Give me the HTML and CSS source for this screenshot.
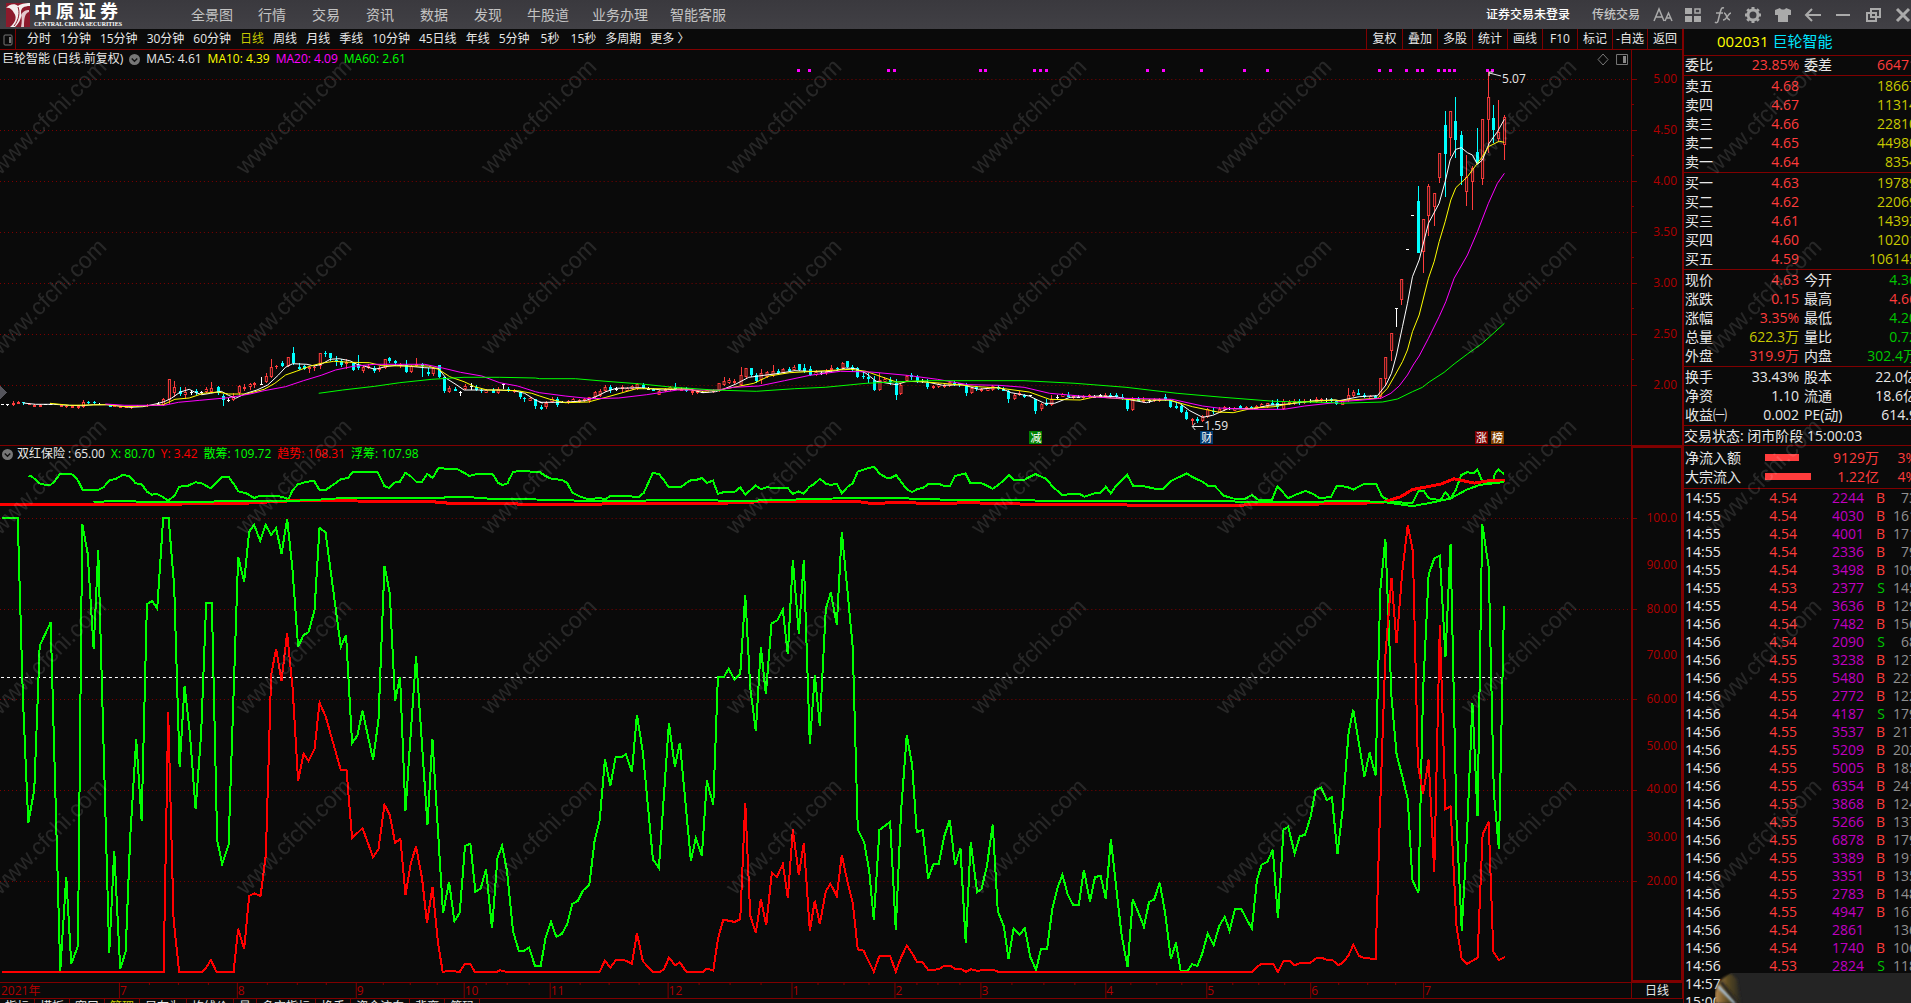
FILE: index.html
```html
<!DOCTYPE html>
<html lang="zh-CN">
<head>
<meta charset="utf-8">
<title>巨轮智能 002031</title>
<link rel="stylesheet" href="styles.css">
</head>
<body>
<div class="app">
  <header class="top">
    <div class="brand">
      <svg class="brand-mark" viewBox="0 0 24 24" aria-hidden="true">
        <rect width="24" height="24" fill="#8c1a2c"/>
        <path d="M0 5C3 1 9 0 12 3C14 1 19 0 24 0V3C18 3 15 5 15 9C16 14 14 19 9 24H4C10 19 11 14 8 10C6 6 3 4 0 5Z" fill="#f4eeee"/>
        <path d="M12 4C14 9 13 17 8 23" stroke="#8c1a2c" fill="none"/>
        <path d="M15 12C17 8 20 7 23 7V9C19 10 18 15 18 24H15C16 19 16 15 15 12Z" fill="#e4c8cc"/>
      </svg>
      <div class="brand-text">
        <div class="brand-cn"><span>中</span><span>原</span><span>证</span><span>券</span></div>
        <div class="brand-en">CENTRAL CHINA SECURITIES</div>
      </div>
    </div>
    <nav class="menu">
      <button class="w3">全景图</button><button>行情</button><button>交易</button><button>资讯</button><button>数据</button><button>发现</button><button class="w3">牛股道</button><button class="w4">业务办理</button><button class="w4">智能客服</button>
    </nav>
    <div class="account">
      <button class="login">证券交易未登录</button>
      <button class="classic">传统交易</button>
    </div>
    <div class="tools">
      <button aria-label="字体"><svg viewBox="0 0 20 20"><path d="M1 16L6 4L11 16M3 12H9M12 16L15.500 8L19 16M13 13H18" fill="none" stroke="#aaa" stroke-width="1.500"/></svg></button>
      <button aria-label="布局"><svg viewBox="0 0 20 20"><path d="M2 3H9V9H2ZM2 11H9V17H2ZM11 11H18V17H11Z" fill="#aaa"/><path d="M12 4H17V8H12Z" fill="none" stroke="#aaa" stroke-width="1.500"/></svg></button>
      <button aria-label="公式"><svg viewBox="0 0 20 20"><path d="M11 3C8 2 8 5 7 8L5 16C4.500 18 3 18 2 17M3 8H10M11 8C14 8 13 15 17 15M18 8C15 8 14 15 10 15" fill="none" stroke="#aaa" stroke-width="1.500"/></svg></button>
      <button aria-label="设置"><svg viewBox="0 0 20 20"><circle cx="10" cy="10" r="5" fill="none" stroke="#aaa" stroke-width="3"/><path d="M10 2V5M10 15V18M2 10H5M15 10H18M4.300 4.300L6.500 6.500M13.500 13.500L15.700 15.700M15.700 4.300L13.500 6.500M6.500 13.500L4.300 15.700" stroke="#aaa" stroke-width="3"/></svg></button>
      <button aria-label="皮肤"><svg viewBox="0 0 20 20"><path d="M7 3C8 5 12 5 13 3L18 5V10H15V17H5V10H2V5Z" fill="#aaa"/></svg></button>
      <button aria-label="后退"><svg viewBox="0 0 20 20"><path d="M9 4L3 10L9 16M3 10H18" fill="none" stroke="#aaa" stroke-width="2"/></svg></button>
      <button aria-label="最小化"><svg viewBox="0 0 20 20"><path d="M3 10H17" stroke="#aaa" stroke-width="2"/></svg></button>
      <button aria-label="还原"><svg viewBox="0 0 20 20"><path d="M8 4H17V12H8ZM4 8H13V16H4Z" fill="none" stroke="#aaa" stroke-width="2"/></svg></button>
      <button aria-label="关闭"><svg viewBox="0 0 20 20"><path d="M4 4L16 16M16 4L4 16" stroke="#aaa" stroke-width="3"/></svg></button>
    </div>
  </header>

  <main class="charts">
    <div class="toolbar">
      <button class="side" aria-label="侧栏"><svg viewBox="0 0 10 12"><rect x="1" y="1" width="8" height="10" rx="1" fill="none" stroke="#777"/><rect x="6" y="3" width="2" height="6" fill="#777"/></svg></button>
      <div class="periods">
        <button>分时</button><button>1分钟</button><button>15分钟</button><button>30分钟</button><button>60分钟</button><button class="on">日线</button><button>周线</button><button>月线</button><button>季线</button><button>10分钟</button><button>45日线</button><button>年线</button><button>5分钟</button><button class="sec">5秒</button><button class="sec">15秒</button><button>多周期</button><button>更多 〉</button>
      </div>
      <div class="actions">
        <button>复权</button><button>叠加</button><button>多股</button><button>统计</button><button>画线</button><button>F10</button><button>标记</button><button>-自选</button><button>返回</button>
      </div>
    </div>

    <section class="price">
      <svg id="price" class="plot" viewBox="0 50 1684 396" preserveAspectRatio="none"></svg>
      <div class="legend">
        <span>巨轮智能 (日线.前复权)</span>
        <svg class="drop" viewBox="0 0 12 12"><circle cx="6" cy="6" r="6" fill="#777"/><path d="M3 5L6 8L9 5" fill="none" stroke="#111" stroke-width="1.500"/></svg>
        <span>MA5: 4.61</span><span class="yellow">MA10: 4.39</span><span class="magenta">MA20: 4.09</span><span class="lime">MA60: 2.61</span>
      </div>
    </section>

    <section class="indicator">
      <svg id="indicator" class="plot" viewBox="0 446 1684 536" preserveAspectRatio="none"></svg>
      <div class="legend">
        <svg class="drop" viewBox="0 0 12 12"><circle cx="6" cy="6" r="6" fill="#777"/><path d="M3 5L6 8L9 5" fill="none" stroke="#111" stroke-width="1.500"/></svg>
        <span class="name">双红保险 : 65.00</span><span class="lime">X: 80.70</span><span class="red">Y: 3.42</span><span class="lime">散筹: 109.72</span><span class="red">趋势: 108.31</span><span class="lime">浮筹: 107.98</span>
      </div>
    </section>

    <svg id="dates" class="dates" viewBox="0 982 1684 17" preserveAspectRatio="none"></svg>
    <div class="tabs">
      <button>指标</button><button>模板</button><button>窗口</button><button class="on">管理</button><button>另存为</button><button>均线价</button><button>量</button><button>多空指标</button><button>换手</button><button>资金流向</button><button>背离</button><button>筹码</button>
    </div>
  </main>

  <aside class="quote">
    <div class="quote-inner">
      <h1><span class="yellow">002031</span> <span class="cyan">巨轮智能</span></h1>
      <table class="grid"><tbody id="ratio"></tbody></table>
      <table class="grid"><tbody id="asks"></tbody></table>
      <table class="grid"><tbody id="bids"></tbody></table>
      <table class="grid"><tbody id="stats"></tbody></table>
      <table class="grid"><tbody id="basics"></tbody></table>
      <p class="state">交易状态: 闭市阶段 15:00:03</p>
      <table class="flow">
        <tbody>
          <tr><th>净流入额</th><td><i class="bar" style="width:34px"></i></td><td class="num">9129万</td><td class="num">3%</td></tr>
          <tr><th>大宗流入</th><td><i class="bar" style="width:46px"></i></td><td class="num">1.22亿</td><td class="num">4%</td></tr>
        </tbody>
      </table>
      <table class="ticks"><tbody id="ticks"></tbody></table>
    </div>
  </aside>
</div>

<svg class="marks" aria-hidden="true">
  <defs>
    <pattern id="mark" x="-74" y="27" width="245" height="180" patternUnits="userSpaceOnUse">
      <text x="123" y="97" text-anchor="middle" transform="rotate(-45 123 90)">www.cfchi.com</text>
    </pattern>
  </defs>
  <rect y="50" width="100%" height="876" fill="url(#mark)"/>
</svg>

<svg class="popup" viewBox="0 0 195 30" preserveAspectRatio="xMinYMin slice" aria-hidden="true">
  <defs>
    <linearGradient id="glow" x1="0" x2="1"><stop offset="0" stop-color="#b88a52"/><stop offset="0.500" stop-color="#5a4a22"/><stop offset="1" stop-color="#242424"/></linearGradient>
    <filter id="soft"><feGaussianBlur stdDeviation="1"/></filter>
  </defs>
  <path d="M4 30C4 14 8 4 16 0H195V30Z" fill="#242424"/>
  <path d="M0 20C2 10 8 3 16 1L22 6L26 30H0Z" fill="url(#glow)" filter="url(#soft)"/>
  <path d="M3 13L20 30" stroke="#a9bccb" stroke-width="3" filter="url(#soft)"/>
  <path d="M6 9L22 29" stroke="#2a2620" stroke-width="3" filter="url(#soft)"/>
</svg>
<script src="chart.js"></script>
</body>
</html>
```
FILE: styles.css
```css
* { box-sizing: border-box; margin: 0; padding: 0; }
body {
  height: 100vh;
  overflow: hidden;
  background: #0a0a0a;
  color: #e8e8e8;
  font: 12px/16px "Open Sans", "Noto Sans CJK SC", sans-serif;
}
button { border: 0; background: none; color: inherit; font: inherit; white-space: nowrap; }
.yellow { color: #ff0; }
.magenta { color: #f0f; }
.lime { color: #0f0; }
.red { color: #f00; }
.cyan { color: #00e5ff; }

.app {
  display: grid;
  grid-template-columns: minmax(0, 1fr) 228px;
  grid-template-rows: 29px minmax(0, 1fr);
  height: 100vh;
}

/* title bar */
.top {
  grid-column: 1 / -1;
  display: flex;
  align-items: center;
  min-width: 0;
  background: linear-gradient(#3a393e, #414045);
  color: #c4c4c4;
  overflow: hidden;
}
.brand { display: flex; gap: 4px; width: 179px; padding-left: 6px; align-items: center; }
.brand-mark { width: 24px; height: 24px; }
.brand-cn { display: flex; gap: 4px; font-size: 18px; line-height: 20px; font-weight: 700; color: #fff; }
.brand-en { font: 700 6px/7px "Liberation Serif", serif; color: #fff; white-space: nowrap; }
.menu { display: flex; font-size: 14px; }
.menu button { width: 54px; text-align: center; }
.menu .w3 { width: 66px; }
.menu .w4 { width: 78px; }
.account { display: flex; gap: 22px; margin-left: auto; padding-right: 8px; }
.login { color: #fff; font-weight: 500; }
.classic { font-weight: 500; }
.tools { display: flex; margin-right: -7px; }
.tools button { display: grid; place-items: center; width: 30px; height: 28px; }
.tools svg { width: 20px; height: 20px; }

/* left side */
.charts { display: flex; flex-direction: column; min-width: 0; }
.toolbar { display: flex; flex: 0 0 21px; border-bottom: 1px solid #800000; }
.side { width: 16px; border-right: 1px solid #800000; }
.side svg { width: 10px; height: 12px; vertical-align: middle; }
.periods { display: flex; gap: 9px; padding-left: 11px; }
.periods .on { color: #c8c800; }
.periods .sec { min-width: 23px; }
.actions { display: flex; margin-left: auto; border-left: 1px solid #800000; border-right: 1px solid #800000; }
.actions button { width: 35px; text-align: center; }
.actions button + button { border-left: 1px solid #800000; }

.price, .indicator { position: relative; min-height: 0; }
.price { flex: 396 1 0; }
.indicator { flex: 536 1 0; }
.plot { position: absolute; inset: 0; width: 100%; height: 100%; }
.legend { position: relative; display: flex; align-items: center; gap: 6px; padding: 1px 2px; white-space: nowrap; }
.indicator .legend { padding-top: 0; }
.indicator .name { margin-left: -2px; }
.drop { width: 11px; height: 11px; }
.dates { flex: 0 0 17px; width: 100%; height: 17px; }
.tabs { display: flex; flex: 0 0 4px; overflow: hidden; align-items: flex-start; }
.tabs button { padding: 0 5px; border-right: 1px solid #800000; }
.tabs .on { color: #c8c800; }

/* chart parts */
.grid-line { stroke: #800000; stroke-dasharray: 1 3; }
.frame { stroke: #800000; fill: none; }
.axis-label { fill: #b00000; font-size: 12px; }
.plot, .dates { shape-rendering: crispEdges; }
.line { fill: none; stroke-width: 1; }
.line.bold { stroke-width: 2; }
.line.heavy { stroke-width: 3; }
.note { fill: #e8e8e8; font-size: 12px; }
.badge { fill: #fff; font-size: 11px; text-anchor: middle; }
.end { text-anchor: end; }

/* quote panel */
.quote { overflow: hidden; border-left: 1px solid #800000; font-size: 14px; }
.quote-inner { width: 234px; }
.quote h1 { height: 27px; padding-left: 33px; border-bottom: 1px solid #800000; font-size: 15px; font-weight: 400; line-height: 25px; }
table { width: 100%; border-collapse: separate; border-spacing: 0; table-layout: fixed; border-bottom: 1px solid #800000; }
th { font-weight: 400; text-align: left; white-space: nowrap; }
td { white-space: nowrap; }
.grid { padding: 0 1px 1px; }
.grid th, .grid td { height: 19px; line-height: 19px; }
.grid #ratio th, .grid #ratio td { height: 18px; line-height: 18px; }
.grid th:first-child { width: 60px; }
.grid td:nth-child(2) { width: 54px; }
.grid th:nth-child(3) { width: 60px; padding-left: 5px; }
.grid td:last-child { text-align: right; }
.num { text-align: right; }
.up { color: #ff3c3c; }
.down { color: #00c800; }
.amt { color: #c8c800; }
.state { height: 20px; border-bottom: 1px solid #800000; line-height: 19px; }
.flow { padding: 2px 1px; }
.flow th, .flow td { height: 19px; line-height: 19px; color: #ff3c3c; }
.flow th { width: 80px; color: #e8e8e8; }
.flow td:nth-child(2) { width: 48px; }
.flow td:nth-child(3) { width: 66px; }
.bar { display: block; height: 7px; background: #ff3c3c; }
.ticks { padding: 0 1px; border: 0; }
.ticks td { height: 18px; line-height: 18px; text-align: right; }
.ticks td:nth-child(1) { width: 50px; text-align: left; }
.ticks td:nth-child(2) { width: 62px; color: #ff3c3c; }
.ticks td:nth-child(3) { width: 67px; color: #c000c0; }
.ticks td:nth-child(4) { width: 21px; }
.ticks td:nth-child(5) { color: #909090; }

/* layers above the page */
.marks { position: fixed; inset: 0; width: 100%; height: 100%; pointer-events: none; }
.marks text { font: 23px "Liberation Sans", sans-serif; fill: #fff; fill-opacity: 0.12; }
.popup { position: fixed; right: 0; bottom: 0; width: 196px; height: 30px; }
```
FILE: chart.js
```js
const NS = 'http://www.w3.org/2000/svg';

function add(parent, tag, attrs, text) {
  const el = document.createElementNS(NS, tag);
  for (const k in attrs) el.setAttribute(k, attrs[k]);
  if (text !== undefined) el.textContent = text;
  parent.appendChild(el);
  return el;
}

// A panel is a stretch of the time line with its own origin and scale.
const early = { x: 0, y: 330, kx: 2.8, ky: 3 };
const middle = { x: 540, y: 340, kx: 1.96, ky: 3 };
const late = { x: 1340, y: 60, kx: 3, ky: 3 };
const lowA = { x: 0, y: 500, kx: 3, ky: 3 };
const lowB = { x: 500, y: 440, kx: 3, ky: 2.785 };
const lowC = { x: 950, y: 440, kx: 2.148, ky: 2.785 };

const px = (p, x) => +(p.x + x / p.kx).toFixed(1);
const py = (p, y) => +(p.y + y / p.ky).toFixed(1);

function line(svg, cls, color, parts) {
  const pts = parts.map(([p, s]) => s.trim().split(/\s+/).map(t => {
    const [x, y] = t.split(',').map(Number);
    return px(p, x) + ',' + py(p, y);
  }).join(' ')).join(' ');
  add(svg, 'polyline', { class: 'line ' + cls, stroke: color, points: pts });
}

// candle: kind, x, high, body top, body bottom, low
function candles(svg, p, half, list) {
  const colors = { r: '#ff3c3c', c: '#00ffff', w: '#ffffff' };
  list.trim().split(/\n/).join(' ').split(';').forEach(row => {
    const f = row.trim().split(/\s+/);
    if (f.length < 6) return;
    const [x, hi, top, bot, lo] = f.slice(1).map(Number);
    const cx = Math.round(px(p, x)), c = colors[f[0]];
    const yh = Math.round(py(p, hi)), yt = Math.round(py(p, top));
    const yb = Math.round(py(p, bot)), yl = Math.round(py(p, lo));
    if (yt > yh) add(svg, 'rect', { x: cx, y: yh, width: 1, height: yt - yh, fill: c });
    if (yl > yb) add(svg, 'rect', { x: cx, y: yb, width: 1, height: yl - yb, fill: c });
    const h = Math.max(1, yb - yt);
    if (f[0] === 'r' && h > 2) {
      add(svg, 'rect', { x: cx - 0.5, y: yt + 0.5, width: 2, height: h - 1, fill: '#0a0a0a', stroke: c });
    } else {
      add(svg, 'rect', { x: cx - 1, y: yt, width: half, height: h, fill: c });
    }
  });
}

/* ---------- price chart ---------- */
const price = document.getElementById('price');
['5.00', '4.50', '4.00', '3.50', '3.00', '2.50', '2.00'].forEach((v, i) => {
  const y = 79.5 + 51 * i;
  add(price, 'line', { class: 'grid-line', x1: 0, x2: 1633, y1: y, y2: y });
  add(price, 'path', { class: 'frame', d: `M1633 ${y}H1638` + (i < 6 ? `M1633 ${y + 25}H1635` : '') });
  add(price, 'text', { class: 'axis-label end', x: 1678, y: Math.round(y + 3) }, v);
});
add(price, 'path', { class: 'frame', d: 'M1632.5 50V446M1683.5 50V446M0 445.500H1684' });

[798, 809, 889, 895, 981, 986, 1035, 1041, 1047, 1148, 1164, 1202, 1245, 1268,
  1380, 1391, 1407, 1418, 1423, 1439, 1445, 1450, 1455, 1488, 1493].forEach(x =>
  add(price, 'rect', { x: x - 1, y: 69, width: 3, height: 3, fill: '#f0f' }));

candles(price, early, 3, `w 5 222 223 224 225; w 20 222 223 226 227; r 35 214 218 226 228; r 50 213 216 222 222; c 65 216 217 220 224;
r 80 220 221 224 225; r 96 222 224 230 230; r 111 222 224 230 230; w 126 222 223 225 225; w 141 220 223 224 226; c 156 222 223 225 226;
r 171 222 225 231 231; r 186 225 228 232 233; r 201 225 228 233 234; r 217 226 229 234 236; r 232 210 215 232 235; c 247 214 216 219 222;
c 262 214 216 220 222; w 277 220 222 224 225; c 307 224 226 230 232; r 320 226 228 231 231; r 337 227 229 233 234; r 352 227 229 233 235;
r 367 228 231 235 237; r 383 225 227 230 231; r 412 222 225 228 230; w 441 215 221 222 224; r 457 204 207 224 228; r 472 148 148 210 222;
r 488 154 171 190 200; c 503 170 184 193 198; r 518 172 186 196 208; w 534 182 186 187 196; c 549 178 184 190 195; w 563 184 187 190 192;
r 578 170 178 186 190; r 592 156 175 185 190; c 609 168 170 188 194; c 623 192 198 209 228; w 639 204 210 211 216; r 653 190 198 210 214;
r 668 165 168 190 195; r 684 162 170 178 184; r 699 160 163 172 180; r 712 156 159 166 174; w 730 142 162 163 165; r 744 128 138 156 160;
r 760 88 112 140 144; r 774 106 107 112 118; c 789 92 100 107 112; r 805 80 82 108 112; c 820 50 68 98 106; c 836 98 110 116 120;
c 850 104 108 117 120; r 864 110 112 116 128; r 880 104 110 114 124; r 895 70 70 108 118; c 911 62 70 73 80; c 925 68 70 84 92;
c 940 78 90 93 108; c 956 88 92 104 112; r 970 88 97 102 118; c 987 95 98 120 122; c 1001 75 106 115 120; r 1015 104 112 124 130;
r 1031 102 107 114 116; c 1047 108 114 122 128; r 1061 108 114 120 126; r 1077 86 88 114 118; c 1090 80 84 94 98; c 1107 90 94 100 108;
r 1120 98 102 108 114; c 1136 90 104 126 128; r 1152 104 108 126 130; r 1166 84 102 108 112; c 1182 98 102 108 140; c 1197 114 126 132 138;
r 1212 112 114 132 138; c 1228 104 106 142 144; c 1242 140 142 184 190; r 1258 168 174 186 190; c 1273 172 178 182 184; w 1287 182 186 187 198;
r 1303 162 168 178 180; w 1318 160 167 168 180; c 1333 165 170 180 184; c 1348 174 180 182 188; r 1362 176 180 188 190; c 1380 174 180 188 190;
r 1393 172 176 190 192; w 1407 160 161 162 178; c 1422 170 178 182 186; r 1440 178 180 186 188; c 1455 182 186 202 206; c 1468 200 203 208 216;
r 1484 202 204 212 214; c 1499 206 208 228 236; c 1514 226 230 234 240; r 1530 212 216 232 236; r 1545 200 206 216 218; c 1559 200 206 224 230`);
candles(price, middle, 3, `c 2 196 200 208 210; r 12 184 188 202 206; r 23 176 178 186 190; c 33 172 180 190 194; w 44 182 186 188 190; r 55 180 182 190 192;
r 65 174 178 186 190; r 76 178 180 186 188; r 86 174 176 184 186; r 96 170 172 184 188; r 107 152 156 172 176; r 117 148 152 168 170;
r 128 134 142 154 156; c 138 134 142 150 160; w 149 142 148 149 152; r 160 136 142 148 156; r 170 142 144 152 154; r 180 134 138 146 150;
r 190 130 132 146 150; c 201 130 134 144 146; w 212 140 146 147 150; c 222 144 146 152 154; r 234 150 154 164 166; r 244 144 148 154 156;
r 255 138 142 150 152; c 265 128 140 146 150; r 276 142 146 152 154; c 286 142 146 152 156; r 297 148 152 160 164; r 307 150 152 160 162;
w 318 152 156 157 160; r 328 146 150 158 160; r 339 146 150 156 158; r 350 128 130 152 156; r 360 110 124 136 138; r 370 114 120 130 132;
r 381 118 122 130 132; r 393 80 104 136 138; r 403 84 84 112 116; c 413 84 84 106 110; c 424 100 106 124 128; r 434 88 98 120 132;
r 445 92 96 110 114; r 457 74 94 108 110; c 466 86 92 100 106; r 477 84 86 98 102; c 487 82 86 94 96; r 497 74 80 90 94;
c 508 72 72 90 92; c 518 72 84 92 98; c 529 78 88 104 108; r 540 90 96 104 108; w 550 92 98 99 104; r 561 88 92 100 104;
r 571 74 84 90 96; c 582 80 84 88 92; r 593 66 68 84 90; c 603 64 64 82 84; c 613 76 82 88 96; c 624 80 84 110 115;
c 635 94 108 112 118; c 645 100 112 118 128; c 656 108 120 150 154; r 667 98 120 150 154; r 677 112 118 126 130; c 687 112 120 126 134;
c 699 118 130 164 180; r 708 128 136 162 166; r 719 104 108 122 126; c 730 98 106 112 120; c 740 106 110 126 128; w 751 118 124 125 130;
c 761 118 128 142 146; r 772 134 138 144 146; r 782 128 132 142 144; r 793 130 134 142 144; r 803 122 126 138 142; c 814 124 130 134 138;
c 824 128 130 136 142; c 836 130 136 158 168; r 846 140 144 160 162; c 857 138 142 148 152; r 867 144 148 154 156; r 878 142 144 152 154;
r 888 134 138 150 152; c 899 134 140 148 150; c 909 142 146 152 154; c 920 150 154 176 188; r 930 160 164 176 180; r 941 154 158 166 168;
c 951 162 164 172 174; w 962 164 166 168 170; c 973 178 178 212 222; r 983 188 192 208 214; c 994 176 188 194 198; r 1004 164 176 194 198;
w 1015 166 170 171 176; r 1025 158 162 170 172; c 1036 156 164 170 172; r 1046 164 168 174 176; w 1057 164 170 171 174; r 1067 166 168 174 176;
r 1078 162 166 172 174; w 1088 164 170 171 174; w 1099 162 166 170 172; r 1109 160 166 172 174; c 1119 158 164 170 174; c 1130 158 164 172 176;
c 1142 162 170 178 180; c 1153 176 178 206 212; r 1163 172 178 210 214; c 1173 170 178 182 184; r 1184 172 180 186 188; w 1195 178 180 182 188;
r 1205 174 178 184 186; r 1216 174 178 184 186; c 1226 162 172 180 182; c 1237 178 180 200 204; c 1248 188 198 204 206; c 1258 196 198 216 218;
c 1269 210 216 238 240; r 1279 234 236 244 256; c 1290 232 238 242 248; r 1300 224 228 244 246; r 1310 204 206 230 234; c 1321 204 212 216 222;
r 1332 200 206 218 220; r 1342 198 202 210 212; w 1352 200 204 206 210; r 1363 200 204 212 214; c 1374 194 198 204 206; r 1385 198 200 206 208;
c 1396 198 200 206 208; r 1406 196 198 206 208; r 1416 188 192 202 204; r 1426 188 190 202 204; c 1436 180 190 194 196; c 1447 178 188 200 206;
r 1458 178 182 206 210; r 1469 180 186 192 196; r 1480 176 182 190 194; c 1490 176 184 190 196; r 1500 178 182 188 192; w 1511 178 182 184 188;
r 1522 172 176 186 190; r 1532 174 178 184 188; w 1542 174 180 182 186; c 1553 174 178 184 188; c 1563 180 184 192 194`);
candles(price, late, 3, `r 10 1020 1022 1034 1036; r 28 984 1006 1020 1026; r 43 990 996 1008 1010; c 58 986 1000 1004 1006; c 76 998 1005 1010 1014; r 92 1006 1008 1016 1018;
c 108 1004 1008 1014 1016; r 124 954 954 1012 1016; r 139 891 891 956 975; r 157 819 819 872 902; w 172 744 744 746 802; r 187 657 657 719 734;
w 204 568 568 570 570; w 219 466 466 468 468; c 238 378 423 578 578; r 253 477 477 575 640; r 268 372 378 467 527; r 286 399 399 440 497;
r 301 279 279 353 369; c 319 153 195 282 411; r 334 153 153 234 288; c 349 111 183 240 294; c 367 213 225 348 375; r 382 285 351 395 438;
r 400 318 324 365 450; c 415 204 276 309 312; r 430 177 177 357 375; r 448 36 111 180 278; c 463 135 174 210 250; r 478 120 216 237 244; r 496 165 171 255 299`);

line(price, '', '#fff', [
  [early, '65,219 100,223 150,223 195,226 230,227 262,224 300,224 335,228 365,232 400,230 440,221 460,215 480,205 505,186 530,178 545,186 565,194 590,190 620,184 640,196 660,205 690,190 720,180 750,165 780,135 800,112 820,101 860,103 880,108 900,103 925,88 950,86 980,92 1000,103 1020,108 1050,118 1080,110 1110,106 1140,108 1190,113 1228,115 1250,145 1280,165 1300,180 1340,180 1390,180 1440,182 1470,190 1500,210 1520,219'],
  [middle, '0,187 50,187 90,182 110,170 130,155 150,145 200,143 240,150 290,146 320,158 345,155 360,148 385,132 410,112 440,106 470,100 500,92 560,96 580,92 600,84 620,86 640,100 660,124 700,134 720,124 760,126 790,136 830,134 860,148 900,142 925,158 960,168 990,190 1010,190 1040,172 1100,168 1130,170 1160,180 1190,188 1210,180 1235,180 1255,190 1275,212 1300,232 1320,226 1350,206 1400,206 1430,196 1470,192 1520,182 1560,180'],
  [late, '0,1022 60,1010 115,1007 140,975 157,940 172,885 190,800 205,730 220,650 240,600 268,490 300,430 318,365 333,300 350,268 367,263 385,278 400,285 415,313 430,300 450,250 475,215 496,178']]);
line(price, '', '#ff0', [
  [early, '140,220 195,226 300,224 350,230 400,228 457,224 490,208 530,204 570,190 610,186 640,192 690,192 740,178 770,160 800,135 830,124 870,108 900,100 935,94 980,97 1035,98 1070,107 1130,108 1200,108 1228,118 1260,140 1300,155 1330,170 1365,180 1400,180 1450,182 1490,190'],
  [middle, '0,168 20,178 50,188 95,186 130,172 190,146 240,146 290,148 320,154 350,150 380,142 420,130 450,108 490,98 560,92 610,88 640,94 670,110 700,126 740,124 790,130 860,140 900,144 960,156 1000,178 1060,180 1090,170 1170,180 1235,180 1280,200 1330,216 1360,218 1400,204 1440,200 1490,186 1560,180'],
  [late, '0,1022 115,1015 145,985 165,950 190,905 205,870 220,815 240,765 268,655 285,605 300,545 318,485 335,420 350,383 385,350 415,310 430,290 448,260 480,244 496,247']]);
line(price, '', '#f0f', [
  [early, '295,222 350,226 460,226 500,217 560,211 640,203 700,192 740,182 800,170 850,152 900,136 940,120 990,109 1050,103 1190,103 1240,114 1290,127 1350,138 1400,158 1450,168 1500,185'],
  [middle, '0,158 50,168 100,176 155,174 210,164 270,150 350,150 380,142 430,138 480,122 530,106 590,94 650,96 720,106 780,118 840,134 900,136 950,142 1000,160 1060,168 1120,174 1240,178 1300,198 1330,204 1400,208 1460,208 1500,198 1560,188'],
  [late, '0,1025 60,1021 125,1015 155,1000 180,978 205,945 222,915 240,888 268,835 300,770 320,725 345,655 385,585 415,515 448,430 475,370 496,340']]);
line(price, '', '#0f0', [
  [early, '893,190 960,180 1050,169 1120,158 1210,148 1300,142 1400,142 1500,144'],
  [middle, '0,116 70,116 130,124 200,132 250,140 340,150 425,154 500,146 560,142 640,130 750,122 950,122 1050,130 1150,142 1250,160 1340,172 1440,184 1560,188'],
  [late, '0,1030 130,1026 175,1017 220,995 250,982 270,966 315,937 345,912 385,882 430,850 465,818 496,790']]);

add(price, 'path', { d: 'M1502 76L1490 73M1490 76V72H1494M1204 426.500H1193M1196 423L1193 426.500L1196 430', stroke: '#e8e8e8', fill: 'none' });
add(price, 'text', { class: 'note', x: 1503, y: 83 }, '5.07');
add(price, 'text', { class: 'note', x: 1205, y: 430 }, '1.59');
[[1036, '减', '#008000'], [1207, '财', '#003a70'], [1482, '涨', '#800000'], [1498, '榜', '#804000']].forEach(([x, t, c]) => {
  add(price, 'rect', { x: x - 6, y: 431, width: 13, height: 13, fill: c });
  add(price, 'text', { class: 'badge', x: x + 0.5, y: 442 }, t);
});
add(price, 'path', { d: 'M1604 54L1609 59.500L1604 65L1599 59.500Z', fill: 'none', stroke: '#777' });
add(price, 'path', { d: 'M1617.500 54.500H1628.500V64.500H1617.500Z', fill: 'none', stroke: '#777' });
add(price, 'rect', { x: 1624, y: 56, width: 3, height: 7, fill: '#888' });
add(price, 'path', { d: 'M0 386L7 392.500L0 399Z', fill: '#55555c' });

/* ---------- indicator chart ---------- */
const ind = document.getElementById('indicator');
[518.5, 609.5, 699.5, 790.5, 881.5].forEach(y => {
  add(ind, 'line', { class: 'grid-line', x1: 0, x2: 1633, y1: y, y2: y });
  add(ind, 'path', { class: 'frame', d: `M1633 ${y}H1638` });
});
[['100.0', 518], ['90.00', 565], ['80.00', 609], ['70.00', 655], ['60.00', 699], ['50.00', 746], ['40.00', 789], ['30.00', 837], ['20.00', 881]]
  .forEach(([v, y]) => add(ind, 'text', { class: 'axis-label end', x: 1678, y: y + 4 }, v));
add(ind, 'path', { class: 'frame', 'stroke-width': 2, d: 'M1633 981V447H1683V981Z' });
add(ind, 'line', { x1: 1, x2: 1506, y1: 677.5, y2: 677.5, stroke: '#fff', 'stroke-dasharray': '3 3' });

line(ind, 'bold', '#0f0', [
  [early, '80,437 90,440 110,460 125,464 142,464 152,455 168,432 200,432 215,445 232,480 260,480 275,480 290,472 307,450 322,448 345,434 365,440 380,460 397,463 412,485 425,494 440,492 455,500 472,512 490,495 502,470 525,468 548,457 565,460 590,475 605,460 622,440 640,440 655,462 668,484 690,490 712,504 730,497 760,497 790,500 808,508 820,480 835,463 860,455 880,453 895,480 912,480 930,467 957,446 975,445 987,427 1058,427 1077,468 1090,474 1107,457 1120,456 1136,428 1152,440 1167,456 1182,456 1197,432 1212,444 1228,415 1280,417 1300,428 1315,438 1335,432 1380,432 1395,458 1408,465 1422,460'],
  [lowB, '28,110 40,90 57,86 120,89 135,99 152,107 188,112 203,120 218,147 240,157 270,166 300,160 315,166 330,157 395,157 415,160 432,148 460,91 478,95 490,108 508,132 543,132 570,113 590,111 607,106 622,120 640,113 655,150 670,146 703,146 722,132 737,152 768,127 784,137 800,132 865,134 880,150 898,143 912,150 930,130 945,122 961,108 980,122 993,125 1012,122 1027,148 1045,130 1060,120 1075,88 1110,77 1125,76 1140,93 1160,105 1175,105 1190,98 1222,137 1238,145 1255,136 1270,134 1287,122 1318,122 1335,128 1352,128 1367,100 1398,93 1413,120 1445,120 1460,126 1480,136'],
  [lowC, '108,122 128,98 138,110 162,110 185,95 208,108 222,130 242,153 260,151 280,150 290,158 310,149 325,147 336,130 347,149 358,128 382,97 395,128 415,128 440,135 460,136 475,115 510,93 525,105 545,117 555,127 570,128 590,155 610,163 635,164 650,153 665,167 693,168 705,128 728,162 745,152 765,142 780,149 797,163 820,158 833,127 855,131 868,138 890,123 917,122 930,158 950,172 995,176 1008,142 1020,143 1030,162 1055,168 1066,145 1077,163 1088,140 1100,98 1112,90 1128,92 1135,83 1145,115 1168,118 1172,95 1180,82 1192,95']]);
line(ind, 'heavy', '#f00', [
  [early, '0,523 460,523 560,521 700,519 780,514 860,511 1000,513 1220,516 1260,520 1450,522'],
  [lowB, '60,179 260,180 340,177 500,176 640,177 780,172 1080,172 1120,177 1190,174 1320,177 1390,175'],
  [lowC, '100,176 170,179 500,182 570,182 860,177 930,174 970,158 995,138 1055,123 1085,108 1128,120 1160,113 1194,113']]);
line(ind, 'bold', '#0f0', [
  [early, '262,517 310,513 370,513 400,517 560,517 640,512 800,513 880,510 960,504 1230,504 1270,500 1340,503 1390,508'],
  [lowB, '0,164 200,167 265,171 400,171 460,167 640,166 670,171 800,168 1000,163 1200,162 1330,166'],
  [lowC, '100,166 230,170 570,170 700,174 860,170 930,172 995,184 1030,176 1077,163 1112,138 1140,125 1192,117']]);

line(ind, 'bold', '#0f0', [
  [lowA, '5,54 53,54 69,600 85,968 103,870 119,438 152,367 181,1412 199,1130 214,1392 234,1338 247,72 263,160 281,446 295,150 328,1360 343,1052 361,1408 377,1355 391,1010 409,718 425,963 441,313 457,303 472,326 490,54 506,54 523,260 539,802 554,557 570,700 587,928 604,700 619,309 636,309 652,1020 667,1092 686,1035 715,170 733,246 748,95 763,74 781,123 797,74 814,105 829,84 845,162 862,56 878,210 895,441 911,405 926,397 944,330 959,84 977,97 1023,440 1039,405 1057,730 1073,706 1088,632 1120,780 1136,660 1154,197 1170,280 1186,603 1201,530 1217,934 1233,700 1249,469 1283,975 1298,718 1330,1240 1348,1145 1364,1264 1380,1238 1396,1038 1412,1031 1427,1176 1443,1165 1459,1108 1477,1285 1493,1075'],
  [lowB, '7,1130 22,1200 40,1368 57,1422 73,1423 88,1413 106,1465 123,1465 138,1385 154,1342 170,1384 187,1375 203,1347 218,1292 235,1283 250,1255 269,1238 285,1115 300,1060 316,890 332,963 348,883 365,883 379,875 397,924 412,765 430,870 460,1168 478,1192 508,788 526,911 541,843 574,1172 589,1108 607,1158 622,948 641,1017 655,660 673,660 687,637 705,668 722,650 737,431 752,690 769,811 784,576 799,708 816,511 833,502 850,473 865,597 880,333 898,540 913,333 931,847 946,655 961,795 979,470 994,425 1012,515 1027,256 1045,430 1060,580 1075,1085 1094,1120 1109,1200 1123,1337 1140,1086 1172,1064 1189,1364 1205,1030 1222,822 1238,905 1252,1092 1270,1086 1286,1222 1302,1181 1318,1181 1334,1105 1351,1058 1367,1184 1383,1136 1399,1401 1414,1119 1433,1259 1446,1251 1462,1190 1480,1071'],
  [lowC, '104,1313 117,1355 127,1445 138,1360 151,1377 162,1360 174,1440 186,1476 197,1417 210,1417 221,1305 233,1245 243,1211 254,1265 266,1295 278,1295 289,1197 302,1285 313,1217 325,1214 336,1278 347,1112 370,1380 383,1468 394,1280 406,1315 418,1356 429,1287 440,1280 452,1233 464,1320 476,1445 487,1400 497,1478 512,1479 521,1460 533,1465 543,1432 555,1375 568,1407 580,1353 592,1328 602,1367 614,1305 627,1305 639,1336 650,1360 661,1225 671,1183 683,1175 695,1141 706,1332 718,1085 728,1077 742,1151 753,1103 764,1100 776,1050 787,975 799,968 811,1003 822,995 834,1152 845,1030 858,815 868,751 880,845 892,937 903,871 916,934 926,420 937,275 950,715 961,875 974,940 985,1000 995,1225 1008,1262 1018,700 1030,375 1042,330 1054,322 1066,605 1077,290 1090,1060 1101,1367 1112,1110 1124,733 1135,1047 1145,233 1159,355 1170,980 1181,1140 1192,462']]);
line(ind, 'bold', '#f00', [
  [lowA, '5,1416 491,1416 505,637 521,1260 538,1416 607,1416 619,1403 633,1380 650,1416 701,1416 715,1286 733,1347 748,1188 763,1180 782,1188 798,1065 814,525 829,446 845,543 862,398 878,560 895,843 911,761 926,783 944,748 959,608 977,648 1023,810 1040,810 1057,1015 1088,984 1120,1072 1136,1047 1154,914 1170,945 1186,1028 1202,1017 1217,1185 1233,1090 1249,1040 1267,1135 1282,1270 1298,1160 1315,1330 1329,1416 1348,1412 1380,1416 1396,1391 1412,1391 1425,1416 1490,1416'],
  [lowB, '0,1477 20,1481 300,1481 316,1450 332,1469 350,1447 379,1450 397,1459 412,1373 430,1452 460,1481 482,1481 493,1474 508,1442 527,1463 541,1455 560,1481 610,1481 622,1472 641,1478 655,1390 671,1336 705,1342 722,1335 737,1010 752,1325 769,1373 784,1278 800,1351 817,1205 832,1217 850,1181 865,1275 880,1085 898,1211 913,1122 931,1367 946,1283 961,1348 979,1257 993,1236 1012,1270 1027,1156 1045,1235 1060,1290 1075,1419 1092,1422 1123,1481 1140,1437 1172,1437 1189,1481 1205,1440 1222,1408 1240,1432 1252,1453 1270,1455 1286,1476 1318,1474 1335,1464 1352,1464 1367,1473 1385,1473 1399,1481 1414,1474 1433,1478 1480,1475'],
  [lowC, '105,1481 650,1481 661,1467 671,1459 696,1459 706,1482 718,1451 730,1450 742,1463 753,1457 775,1456 790,1442 800,1442 811,1448 823,1448 836,1463 845,1456 857,1437 868,1406 880,1437 893,1443 916,1445 926,1010 937,600 950,384 961,566 973,370 985,237 996,310 1007,905 1018,985 1030,890 1042,1204 1054,514 1066,1028 1077,1021 1090,1355 1101,1445 1112,1459 1135,1442 1146,1098 1159,1063 1169,1425 1181,1448 1194,1440']]);

/* ---------- time axis ---------- */
const dates = document.getElementById('dates');
add(dates, 'path', { class: 'frame', d: 'M0 982.500H1684M0 998.500H1684M1632.500 982V999M1683.500 982V999' });
add(dates, 'text', { class: 'axis-label', x: 1, y: 995 }, '2021年');
const months = [['7', 119], ['8', 237], ['9', 356], ['10', 464], ['11', 550], ['12', 668], ['1', 792], ['2', 895], ['3', 981], ['4', 1106], ['5', 1207], ['6', 1311], ['7', 1424]];
months.forEach(([t, x], i) => {
  add(dates, 'path', { class: 'frame', d: `M${x + 0.5} 982V999` });
  add(dates, 'text', { class: 'axis-label', x: x + 1, y: 995 }, t);
  if (i < months.length - 1) {
    const step = (months[i + 1][1] - x) / 4;
    for (let k = 1; k < 4; k++) add(dates, 'path', { class: 'frame', d: `M${Math.round(x + step * k) + 0.5} 982V985` });
  }
});
add(dates, 'text', { class: 'note', x: 1646, y: 995 }, '日线');

/* ---------- quote tables ---------- */
function rows(id, data) {
  document.getElementById(id).innerHTML = data.map(([a, b, bc, c, d, dc]) =>
    `<tr><th>${a}</th><td class="num ${bc}">${b}</td><th>${c}</th><td class="${dc}">${d}</td></tr>`).join('');
}
rows('ratio', [['委比', '23.85%', 'up', '委差', '66471', 'up']]);
rows('asks', [['卖五', '4.68', 'up', '', '18667', 'amt'], ['卖四', '4.67', 'up', '', '11314', 'amt'], ['卖三', '4.66', 'up', '', '22810', 'amt'], ['卖二', '4.65', 'up', '', '44980', 'amt'], ['卖一', '4.64', 'up', '', '8354', 'amt']]);
rows('bids', [['买一', '4.63', 'up', '', '19789', 'amt'], ['买二', '4.62', 'up', '', '22069', 'amt'], ['买三', '4.61', 'up', '', '14392', 'amt'], ['买四', '4.60', 'up', '', '10201', 'amt'], ['买五', '4.59', 'up', '', '106145', 'amt']]);
rows('stats', [['现价', '4.63', 'up', '今开', '4.36', 'down'], ['涨跌', '0.15', 'up', '最高', '4.66', 'up'], ['涨幅', '3.35%', 'up', '最低', '4.20', 'down'], ['总量', '622.3万', 'amt', '量比', '0.72', 'down'], ['外盘', '319.9万', 'up', '内盘', '302.4万', 'down']]);
rows('basics', [['换手', '33.43%', '', '股本', '22.0亿', ''], ['净资', '1.10', '', '流通', '18.6亿', ''], ['收益㈠', '0.002', '', 'PE(动)', '614.9', '']]);

const ticks = `14:55 4.54 2244 B 73|14:55 4.54 4030 B 161|14:55 4.54 4001 B 171|14:55 4.54 2336 B 79|14:55 4.54 3498 B 109|14:55 4.53 2377 S 145|14:55 4.54 3636 B 129|14:56 4.54 7482 B 156|14:56 4.54 2090 S 68|14:56 4.55 3238 B 127|14:56 4.55 5480 B 221|14:56 4.55 2772 B 122|14:56 4.54 4187 S 179|14:56 4.55 3537 B 217|14:56 4.55 5209 B 202|14:56 4.55 5005 B 185|14:56 4.55 6354 B 241|14:56 4.55 3868 B 124|14:56 4.55 5266 B 137|14:56 4.55 6878 B 179|14:56 4.55 3389 B 191|14:56 4.55 3351 B 135|14:56 4.55 2783 B 148|14:56 4.55 4947 B 167|14:56 4.54 2861 - 136|14:56 4.54 1740 B 106|14:56 4.53 2824 S 118|14:57 - - - -|15:00 - - - -`;
document.getElementById('ticks').innerHTML = ticks.split('|').map(r => {
  const [t, p, v, s, n] = r.split(' ').map(c => c === '-' ? '' : c);
  return `<tr><td>${t}</td><td>${p}</td><td>${v}</td><td class="${s === 'S' ? 'down' : 'up'}">${s}</td><td>${n}</td></tr>`;
}).join('');
```
